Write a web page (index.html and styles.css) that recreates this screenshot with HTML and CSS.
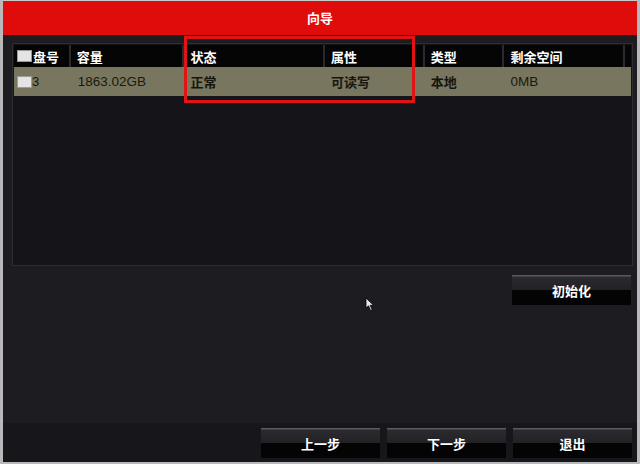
FILE: index.html
```html
<!DOCTYPE html>
<html lang="zh-CN">
<head>
    <meta charset="UTF-8">
    <meta name="viewport" content="width=device-width, initial-scale=1.0">
    <title>向导</title>
    <link rel="stylesheet" href="styles.css">
</head>
<body>
    <div class="wizard">
        <div class="wizard__title">向导</div>
        <div class="wizard__body">
            <div class="disk-panel">
                <div class="disk-row disk-row--head">
                    <div class="cell c-no"><span class="check"></span>盘号</div>
                    <div class="cell c-size">容量</div>
                    <div class="cell c-state">状态</div>
                    <div class="cell c-attr">属性</div>
                    <div class="cell c-type">类型</div>
                    <div class="cell c-free">剩余空间</div>
                    <div class="cell c-end"></div>
                </div>
                <div class="disk-row disk-row--item">
                    <div class="cell c-no"><span class="check"></span>3</div>
                    <div class="cell c-size num">1863.02GB</div>
                    <div class="cell c-state">正常</div>
                    <div class="cell c-attr">可读写</div>
                    <div class="cell c-type">本地</div>
                    <div class="cell c-free num">0MB</div>
                    <div class="cell c-end"></div>
                </div>
            </div>
            <div class="tools">
                <div class="btn btn--init">初始化</div>
            </div>
        </div>
        <div class="wizard__foot">
            <div class="btn">上一步</div>
            <div class="btn">下一步</div>
            <div class="btn">退出</div>
        </div>

        <!-- 标注框 -->
        <div class="mark"></div>

        <svg class="pointer" width="10" height="15" viewBox="0 0 10 15">
            <path d="M1 1 L1 11 L3.5 8.8 L5.6 13.5 L7.2 12.8 L5.2 8.3 L8.5 8.3 Z" fill="#e8e8e8" stroke="#000" stroke-width="0.8"/>
        </svg>
    </div>
</body>
</html>
```

FILE: styles.css
```css
* {
    box-sizing: border-box;
}
body {
    margin: 0;
    background: #1d1c21;
    font-family: "Noto Sans CJK SC", "Liberation Sans", sans-serif;
}
.wizard {
    position: relative;
    display: flex;
    flex-direction: column;
    width: 640px;
    height: 464px;
    border-left: 3px solid #b9b9bb;
    border-right: 3px solid #b9b9bb;
    border-bottom: 2px solid #b9b9bb;
    background: #1d1c21;
}
.wizard__title {
    height: 36px;
    line-height: 34px;
    background: #e00b0b;
    border-top: 1px solid #c9c9c9;
    border-bottom: 1px solid #500;
    color: #fff;
    font-size: 13px;
    font-weight: bold;
    text-align: center;
}
.wizard__body {
    flex: 1;
    padding: 7px 6px 0 9px;
}
.disk-panel {
    height: 223px;
    margin-right: -2px;
    padding: 1px;
    border: 1px solid #2e2d32;
    background: #151419;
}
.disk-row {
    display: flex;
    height: 22px;
}
.disk-row--head {
    background: #050506;
    color: #fff;
    font-weight: bold;
}
.disk-row--item {
    height: 29px;
    background: #78765e;
    color: #151510;
    font-weight: bold;
}
.cell {
    display: flex;
    align-items: center;
    font-size: 13px;
    padding-left: 6px;
}
.disk-row--head .cell {
    border-right: 2px solid #2a2a2e;
}
.disk-row--head .c-end {
    border-right: none;
}
.c-no {
    width: 57px;
    padding-left: 3px;
}
.c-size {
    width: 114px;
}
.c-state {
    width: 141px;
}
.c-attr {
    width: 100px;
}
.c-type {
    width: 80px;
}
.c-free {
    width: 121px;
}
.c-end {
    flex: 1;
}
.num {
    font-family: "Liberation Sans", sans-serif;
    font-size: 13.5px;
    font-weight: normal;
    color: #19190f;
}
.c-size.num {
    padding-left: 7px;
}
.disk-row--item .c-no {
    font-family: "Liberation Sans", sans-serif;
    font-weight: normal;
}
.check {
    display: inline-block;
    width: 15px;
    height: 12px;
    margin-right: 1px;
    background: #e4e4e4;
    border: 1px solid #9a9a9a;
}
.disk-row--item .check {
    margin-right: 0;
}
.tools {
    display: flex;
    justify-content: flex-end;
    margin-top: 9px;
}
.btn {
    display: flex;
    align-items: center;
    justify-content: center;
    width: 119px;
    height: 30px;
    background: linear-gradient(#5b5a5e 0, #5b5a5e 1px, #2b2a2f 2px, #222126 50%, #040405 50%, #040405 100%);
    color: #fff;
    font-size: 13px;
    font-weight: bold;
}
.wizard__foot {
    display: flex;
    justify-content: flex-end;
    gap: 7px;
    height: 39px;
    padding: 5px 5px 0 0;
    background: #17161b;
}
.mark {
    position: absolute;
    left: 181px;
    top: 36px;
    width: 231px;
    height: 67px;
    border: 3px solid #e01414;
}
.pointer {
    position: absolute;
    left: 362px;
    top: 297px;
}
```
